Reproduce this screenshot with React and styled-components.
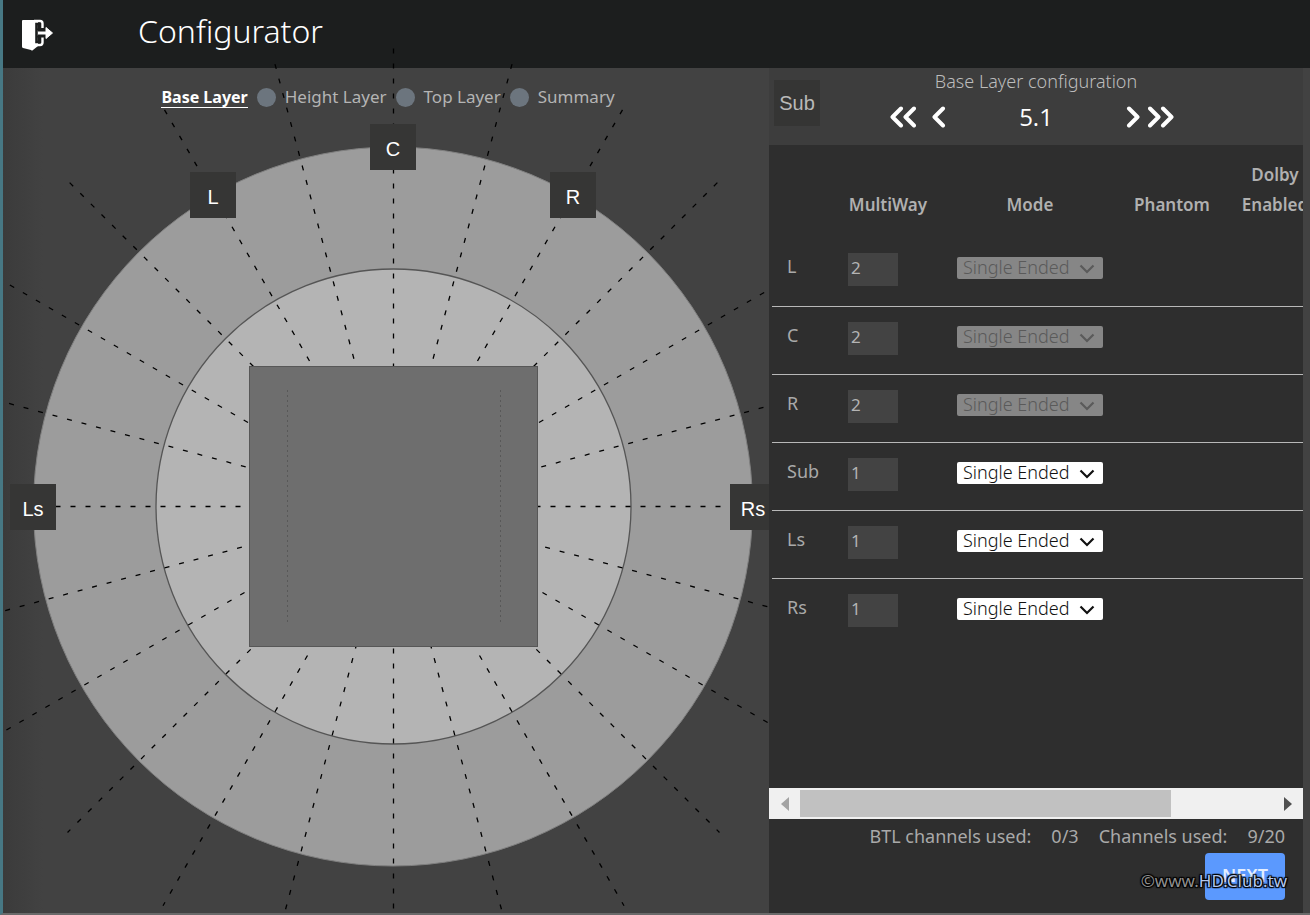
import React, { useState } from 'react';
import styled, { createGlobalStyle } from 'styled-components';

const GlobalStyle = createGlobalStyle`
  * {
    box-sizing: border-box;
  }

  body {
    margin: 0;
    background: #424242;
    font-family: 'Noto Sans', 'Open Sans', sans-serif;
    color: #b4b4b4;
  }
`;

const Page = styled.div`
  position: relative;
  display: flex;
  flex-direction: column;
  min-height: 100vh;
  overflow: hidden;
  border-left: 3px solid #477884;
  border-bottom: 2px solid #6a6a6a;
`;

const Header = styled.header`
  display: flex;
  align-items: center;
  gap: 83px;
  height: 68px;
  padding: 0 18px;
  background: #1c1e1e;
`;

const ExitButton = styled.button`
  display: flex;
  width: 34px;
  height: 34px;
  padding: 0;
  border: none;
  background: none;
`;

const Title = styled.h1`
  margin: 0;
  padding-bottom: 6px;
  color: #ffffff;
  font-size: 32px;
  font-weight: 300;
  line-height: 40px;
`;

const Main = styled.main`
  flex: 1;
  display: grid;
  grid-template-columns: minmax(0, 1fr) 534px;
  padding-right: 7px;
`;

const Stage = styled.section`
  background: linear-gradient(90deg, #3b3b3b, #424242 40px);
`;

const Steps = styled.nav`
  display: flex;
  justify-content: center;
  align-items: center;
  gap: 9px;
  height: 79px;
  padding: 0 0 20px 4px;
`;

const Step = styled.a`
  color: ${({ $active }) => ($active ? '#ffffff' : '#b4b4b4')};
  font-size: ${({ $active }) => ($active ? 16 : 17)}px;
  font-weight: ${({ $active }) => ($active ? 700 : 400)};
  line-height: 20px;
  white-space: nowrap;
  text-decoration: none;
  border-bottom: 1px solid ${({ $active }) => ($active ? '#ffffff' : 'transparent')};
`;

const StepDot = styled.span`
  width: 19px;
  height: 19px;
  border-radius: 50%;
  background: #6c757e;
`;

const Room = styled.div`
  position: relative;
  width: 720px;
  height: 720px;
  margin: 0 auto;
  left: 7px;
`;

const RoomDrawing = styled.svg`
  display: block;
  overflow: visible;
`;

const Speaker = styled.button`
  position: absolute;
  width: 46px;
  height: 46px;
  padding: 4px 0 0;
  border: none;
  background: #363635;
  color: #ffffff;
  font-family: 'Liberation Sans', Arial, sans-serif;
  font-size: 20px;
  transform: translate(-50%, -50%);
`;

const Panel = styled.aside`
  position: relative;
  z-index: 1;
  display: flex;
  flex-direction: column;
  min-width: 0;
  background: #2e2e2e;
`;

const PanelHead = styled.div`
  display: grid;
  grid-template-columns: 46px 1fr 46px;
  height: 77px;
  padding: 0 5px;
  background: #3d3d3d;
`;

const SubButton = styled.button`
  height: 46px;
  margin-top: 12px;
  padding: 0;
  border: none;
  background: #353534;
  color: #b9b9b9;
  font-family: 'Liberation Sans', Arial, sans-serif;
  font-size: 20px;
`;

const PanelTitle = styled.h2`
  margin: 0;
  color: #bcbcbc;
  font-size: 18px;
  font-weight: 300;
  line-height: 26px;
  text-align: center;
`;

const Pager = styled.div`
  display: flex;
  justify-content: center;
  align-items: center;
  height: 46px;
  padding-right: 8px;
`;

const PagerGroup = styled.div`
  display: flex;
  gap: ${({ $gap }) => $gap}px;
`;

const PagerButton = styled.button`
  display: flex;
  padding: 0;
  border: none;
  background: none;
`;

const PagerValue = styled.output`
  width: 180px;
  color: #ffffff;
  font-family: 'Open Sans', sans-serif;
  font-size: 24px;
  line-height: 40px;
  text-align: center;
`;

const TableWrap = styled.div`
  flex: 1;
  overflow: hidden;
`;

const Table = styled.table`
  width: 682px;
  margin-left: 3px;
  table-layout: fixed;
  border-collapse: collapse;
  font-size: 18px;
`;

const Th = styled.th`
  width: ${({ $width }) => $width}px;
  height: 93px;
  padding: 0 0 18px;
  color: #b0b0b0;
  font-size: 17px;
  font-weight: 600;
  line-height: 30px;
  vertical-align: bottom;
`;

const Row = styled.tr`
  height: 68px;
  border-bottom: 1px solid #b8b8b8;

  &:last-child {
    border-bottom: none;
  }
`;

const Cell = styled.td`
  padding: ${({ $pad }) => $pad};
  vertical-align: top;
`;

const ChannelLabel = styled.span`
  color: #a9a9a9;
  line-height: 24px;
`;

const WayInput = styled.input`
  display: block;
  width: 50px;
  height: 33px;
  padding: 0 3px 4px;
  border: none;
  background: #434343;
  color: #b4b4b4;
  font-family: inherit;
  font-size: 17px;
`;

const SelectWrap = styled.div`
  position: relative;
  display: flow-root;
  width: 146px;
  height: 22px;
  border-radius: 2px;
  background: ${({ $disabled }) => ($disabled ? '#868686' : '#ffffff')};
  color: ${({ $disabled }) => ($disabled ? '#5a5a5a' : '#111111')};

  svg {
    position: absolute;
    top: 7px;
    right: 8px;
    pointer-events: none;
  }
`;

/* taller than its wrapper so that descenders are not clipped */
const ModeSelect = styled.select`
  display: block;
  appearance: none;
  width: 100%;
  height: 26px;
  margin-top: -3px;
  padding: 0 0 0 6px;
  border: none;
  background: none;
  color: inherit;
  font-family: inherit;
  font-size: 18px;
  font-weight: 300;
  line-height: 26px;
  opacity: 1;
`;

const ScrollBar = styled.div`
  display: flex;
  align-items: center;
  height: 31px;
  background: #f0f0f0;
`;

const ScrollButton = styled.button`
  display: flex;
  justify-content: center;
  align-items: center;
  width: 31px;
  height: 31px;
  padding: 0;
  border: none;
  background: none;
`;

const ScrollTrack = styled.div`
  flex: 1;
  height: 27px;
`;

const ScrollThumb = styled.div`
  height: 27px;
  background: #c1c1c1;
`;

const PanelFoot = styled.footer`
  position: relative;
  display: flex;
  flex-direction: column;
  align-items: flex-end;
  height: 94px;
  padding: 0 18px;
`;

const Usage = styled.dl`
  display: flex;
  gap: 20px;
  margin: 0;
  font-size: 18px;
  line-height: 34px;
  color: #a9a9a9;

  dd {
    margin: 0;
  }
`;

const NextButton = styled.button`
  width: 80px;
  height: 47px;
  padding: 0 0 4px;
  border: none;
  border-radius: 4px;
  background: #5b99fe;
  color: #e4eeff;
  font-family: inherit;
  font-size: 18px;
  font-weight: 600;
`;

const Watermark = styled.span`
  position: absolute;
  right: 16px;
  bottom: 20px;
  color: #8f8f8f;
  font-size: 17px;
  line-height: 24px;
  text-shadow: 1px 1px 1px #000, -1px -1px 1px #000, 1px -1px 1px #000, -1px 1px 1px #000, 0 0 2px #000, 0 0 2px #000;
  pointer-events: none;

  em {
    color: #b3c8f0;
    font-style: normal;
  }
`;

const steps = ['Base Layer', 'Height Layer', 'Top Layer', 'Summary'];

// angle in degrees, clockwise from the front of the room
const speakers = [
  { name: 'L', angle: -30 },
  { name: 'C', angle: 0 },
  { name: 'R', angle: 30 },
  { name: 'Ls', angle: -90 },
  { name: 'Rs', angle: 90 },
];

const channels = [
  { name: 'L', ways: 2, locked: true },
  { name: 'C', ways: 2, locked: true },
  { name: 'R', ways: 2, locked: true },
  { name: 'Sub', ways: 1, locked: false },
  { name: 'Ls', ways: 1, locked: false },
  { name: 'Rs', ways: 1, locked: false },
];

const layouts = ['5.1'];
const ROOM_RADIUS = 360;
const GUIDE_RADIUS = 458;
const guideAngles = [0, 15, 30, 45, 60, 75, -90, -75, -60, -45, -30, -15];

const place = (angle, radius) => {
  const rad = (angle * Math.PI) / 180;
  return {
    x: ROOM_RADIUS + radius * Math.sin(rad),
    y: ROOM_RADIUS - radius * Math.cos(rad),
  };
};

const ExitIcon = () => (
  <svg width="34" height="34" viewBox="0 0 34 34">
    <path d="M1 4 Q1 3 2 3 H17 V29 L12 33 Q11 34 10 33 L2 31 Q1 30.500 1 29.500 Z" fill="#ffffff" />
    <path d="M13 4 H19 Q21.500 4 21.500 6.500 V11 M21.500 19 V25.500 Q21.500 28 19 28 H14" fill="none" stroke="#ffffff" strokeWidth="2.400" />
    <path d="M19 7 H15.500 V25 H19" fill="none" stroke="#1c1e1e" strokeWidth="2.600" />
    <path d="M16 12.500 H24 M16 19.500 H24" stroke="#1c1e1e" strokeWidth="2" />
    <path d="M18 7 V12 M18 20 V25" stroke="#1c1e1e" strokeWidth="3" />
    <path d="M17 16 H26" stroke="#ffffff" strokeWidth="3" />
    <path d="M25 10.500 L31.500 16 L25 21.500 Z" fill="#ffffff" stroke="#ffffff" strokeLinejoin="round" />
  </svg>
);

const Chevrons = ({ count, flip }) => {
  const width = count === 2 ? 26 : 14;
  return (
    <svg width={width} height="22" viewBox={`0 0 ${width} 22`}>
      <g
        transform={flip ? `translate(${width} 0) scale(-1 1)` : undefined}
        fill="none"
        stroke="#ffffff"
        strokeWidth="4"
        strokeLinecap="round"
        strokeLinejoin="round"
      >
        <path d="M11 2.500 L2.500 11 L11 19.500" />
        {count === 2 && <path d="M24 2.500 L15.500 11 L24 19.500" />}
      </g>
    </svg>
  );
};

const RoomView = () => (
  <Room>
    <RoomDrawing width="720" height="720" viewBox="0 0 720 720">
      <circle cx="360" cy="359.500" r="359.500" fill="#9c9c9c" stroke="#808080" />
      <circle cx="360.500" cy="359.500" r="237.500" fill="#b4b4b4" stroke="#555555" strokeWidth="1.300" />
      {guideAngles.map((angle) => {
        const from = place(angle, GUIDE_RADIUS);
        const to = place(angle + 180, GUIDE_RADIUS + 3);
        return (
          <line
            key={angle}
            x1={from.x}
            y1={from.y}
            x2={to.x}
            y2={to.y}
            transform="translate(0.500 -0.500)"
            stroke="#000000"
            strokeWidth="1.300"
            strokeDasharray="5 10"
          />
        );
      })}
      <rect x="216.500" y="219.500" width="288" height="280" fill="#6e6e6e" stroke="#575757" />
      <path d="M254.500 243 V478 M467.500 243 V478" stroke="#585858" strokeDasharray="2 3" />
    </RoomDrawing>
    {speakers.map(({ name, angle }) => {
      const { x, y } = place(angle, ROOM_RADIUS);
      return (
        <Speaker key={name} type="button" style={{ left: Math.round(x), top: Math.round(y) }}>
          {name}
        </Speaker>
      );
    })}
  </Room>
);

const ChannelRow = ({ channel }) => {
  const [ways, setWays] = useState(channel.ways);
  return (
    <Row>
      <Cell $pad="16px 0 0 15px">
        <ChannelLabel>{channel.name}</ChannelLabel>
      </Cell>
      <Cell $pad="15px 0 0 12px">
        <WayInput
          aria-label={`${channel.name} multiway`}
          value={ways}
          onChange={(e) => setWays(e.target.value)}
        />
      </Cell>
      <Cell $pad="19px 0 0 17px">
        <SelectWrap $disabled={channel.locked}>
          <ModeSelect aria-label={`${channel.name} mode`} disabled={channel.locked}>
            <option>Single Ended</option>
          </ModeSelect>
          <svg width="16" height="10" viewBox="0 0 16 10">
            <path d="M1.500 1.500 L8 8 L14.500 1.500" fill="none" stroke="currentColor" strokeWidth="2.200" />
          </svg>
        </SelectWrap>
      </Cell>
      <Cell />
      <Cell />
      <Cell />
    </Row>
  );
};

const App = () => {
  return (
    <>
      <GlobalStyle />
      <Page>
        <Header>
          <ExitButton type="button" aria-label="Exit">
            <ExitIcon />
          </ExitButton>
          <Title>Configurator</Title>
        </Header>

        <Main>
          <Stage>
            <Steps>
              {steps.map((step, i) => (
                <React.Fragment key={step}>
                  {i > 0 && <StepDot />}
                  <Step href="#" $active={i === 0}>
                    {step}
                  </Step>
                </React.Fragment>
              ))}
            </Steps>
            <RoomView />
          </Stage>

          <Panel>
            <PanelHead>
              <SubButton type="button">Sub</SubButton>
              <div>
                <PanelTitle>Base Layer configuration</PanelTitle>
                <Pager>
                  <PagerGroup $gap={16}>
                    <PagerButton type="button" aria-label="First layout">
                      <Chevrons count={2} />
                    </PagerButton>
                    <PagerButton type="button" aria-label="Previous layout">
                      <Chevrons count={1} />
                    </PagerButton>
                  </PagerGroup>
                  <PagerValue>{layouts[0]}</PagerValue>
                  <PagerGroup $gap={8}>
                    <PagerButton type="button" aria-label="Next layout">
                      <Chevrons count={1} flip />
                    </PagerButton>
                    <PagerButton type="button" aria-label="Last layout">
                      <Chevrons count={2} flip />
                    </PagerButton>
                  </PagerGroup>
                </Pager>
              </div>
            </PanelHead>

            <TableWrap>
              <Table>
                <thead>
                  <tr>
                    <Th $width={64} />
                    <Th $width={104}>MultiWay</Th>
                    <Th $width={180}>Mode</Th>
                    <Th $width={104}>Phantom</Th>
                    <Th $width={102}>
                      Dolby
                      <br />
                      Enabled
                    </Th>
                    <Th $width={128} />
                  </tr>
                </thead>
                <tbody>
                  {channels.map((channel) => (
                    <ChannelRow key={channel.name} channel={channel} />
                  ))}
                </tbody>
              </Table>
            </TableWrap>

            <ScrollBar>
              <ScrollButton type="button" aria-label="Scroll left">
                <svg width="8" height="14" viewBox="0 0 8 14">
                  <path d="M8 0 V14 L0 7 Z" fill="#a3a3a3" />
                </svg>
              </ScrollButton>
              <ScrollTrack>
                <ScrollThumb style={{ width: `${(534 / 680) * 100}%` }} />
              </ScrollTrack>
              <ScrollButton type="button" aria-label="Scroll right">
                <svg width="8" height="14" viewBox="0 0 8 14">
                  <path d="M0 0 V14 L8 7 Z" fill="#505050" />
                </svg>
              </ScrollButton>
            </ScrollBar>

            <PanelFoot>
              <Usage>
                <dt>BTL channels used:</dt>
                <dd>0/3</dd>
                <dt>Channels used:</dt>
                <dd>9/20</dd>
              </Usage>
              <NextButton type="button">NEXT</NextButton>
              <Watermark>
                ©www.<em>HD.Club.tw</em>
              </Watermark>
            </PanelFoot>
          </Panel>
        </Main>
      </Page>
    </>
  );
};

export default App;
